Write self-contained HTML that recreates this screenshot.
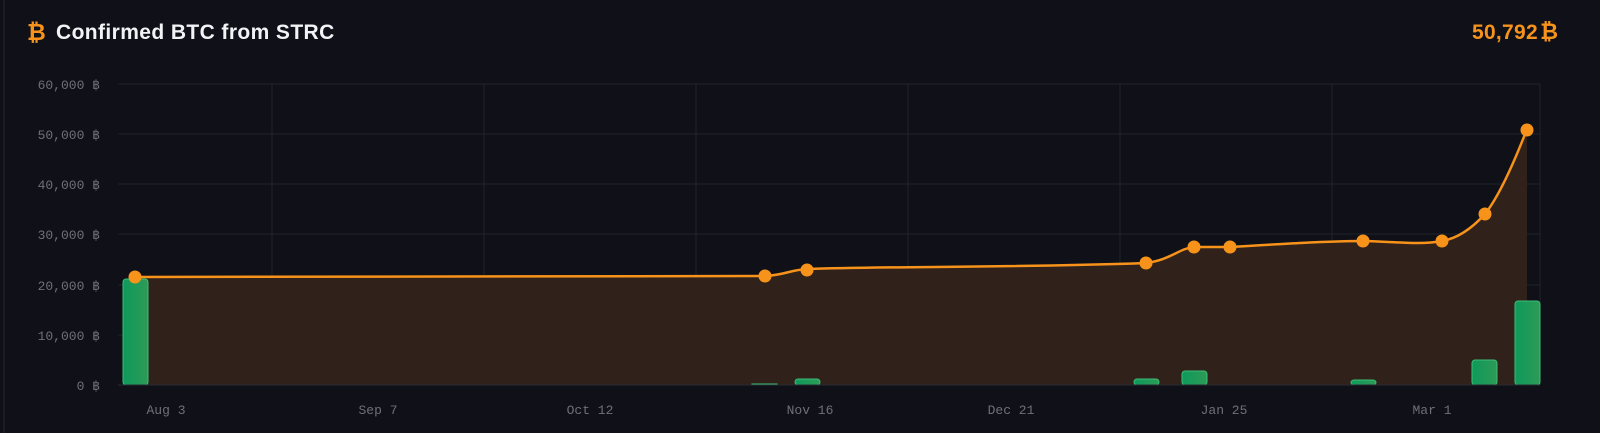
<!DOCTYPE html>
<html><head><meta charset="utf-8"><style>
html,body{margin:0;padding:0;background:#0f1018;width:1600px;height:433px;overflow:hidden}
body{position:relative;font-family:"Liberation Sans",sans-serif}
.edge{position:absolute;left:3px;top:0;width:2px;height:433px;background:#1a1b24}
.title{position:absolute;left:56px;top:21px;color:#f3f3f5;font-size:21px;font-weight:bold;letter-spacing:0.4px}
.ic{position:absolute;left:27px;top:19px;color:#f7931a;font-size:23px;font-weight:bold}
.val{position:absolute;right:62px;top:21px;color:#f7931a;font-size:21px;font-weight:bold;letter-spacing:0.3px}
.valb{position:absolute;right:42px;top:19px;color:#f7931a;font-size:22px;font-weight:bold}
svg{position:absolute;left:0;top:0}
</style></head><body>
<div class="edge"></div>
<div class="ic">₿</div>
<div class="title">Confirmed BTC from STRC</div>
<div class="val">50,792</div><div class="valb">₿</div>
<svg width="1600" height="433" viewBox="0 0 1600 433">
<defs>
<linearGradient id="g" x1="0" x2="1" y1="0" y2="0"><stop offset="0" stop-color="#0e9a5c"/><stop offset="1" stop-color="#2e9a56"/></linearGradient>
</defs>
<g stroke="#22232c" stroke-width="1">
<line x1="118" x2="1540" y1="84" y2="84"/><line x1="118" x2="1540" y1="134" y2="134"/><line x1="118" x2="1540" y1="184" y2="184"/><line x1="118" x2="1540" y1="234" y2="234"/><line x1="118" x2="1540" y1="285" y2="285"/><line x1="118" x2="1540" y1="335" y2="335"/>
<line x1="272" x2="272" y1="84" y2="385"/><line x1="484" x2="484" y1="84" y2="385"/><line x1="696" x2="696" y1="84" y2="385"/><line x1="908" x2="908" y1="84" y2="385"/><line x1="1120" x2="1120" y1="84" y2="385"/><line x1="1332" x2="1332" y1="84" y2="385"/><line x1="1540" x2="1540" y1="84" y2="385"/>
</g>
<path d="M135,277 L765,276 C785,275 790,270 807,269 C900,266 1000,268 1146,263 C1170,260 1180,248 1194,247 L1230,247 C1280,244 1330,241 1363,241 C1400,242 1420,245 1442,241 C1460,238 1475,225 1485,214 C1500,195 1515,160 1527,129 L1527,385 L135,385 Z" fill="#33241a" opacity="0.95"/>
<g fill="url(#g)" stroke="#3bbd75" stroke-width="1">
<rect x="123" y="279" width="25" height="106" rx="3"/>
<rect x="752" y="384" width="25" height="1"/>
<rect x="795" y="379" width="25" height="6" rx="3"/>
<rect x="1134" y="379" width="25" height="6" rx="3"/>
<rect x="1182" y="371" width="25" height="14" rx="3"/>
<rect x="1351" y="380" width="25" height="5" rx="3"/>
<rect x="1472" y="360" width="25" height="25" rx="3"/>
<rect x="1515" y="301" width="25" height="84" rx="3"/>
</g>
<line x1="118" x2="1540" y1="385" y2="385" stroke="#2a2b33"/>
<path d="M135,277 L765,276 C785,275 790,270 807,269 C900,266 1000,268 1146,263 C1170,260 1180,248 1194,247 L1230,247 C1280,244 1330,241 1363,241 C1400,242 1420,245 1442,241 C1460,238 1475,225 1485,214 C1500,195 1515,160 1527,129" fill="none" stroke="#f7931a" stroke-width="2.5"/>
<g fill="#f7931a">
<circle cx="135" cy="277" r="6.5"/><circle cx="765" cy="276" r="6.5"/><circle cx="807" cy="270" r="6.5"/><circle cx="1146" cy="263" r="6.5"/><circle cx="1194" cy="247" r="6.5"/><circle cx="1230" cy="247" r="6.5"/><circle cx="1363" cy="241" r="6.5"/><circle cx="1442" cy="241" r="6.5"/><circle cx="1485" cy="214" r="6.5"/><circle cx="1527" cy="130" r="6.5"/>
</g>
<g font-family="Liberation Mono, monospace" font-size="13" fill="#6e707a" text-anchor="end">
<text x="100" y="89">60,000 ฿</text><text x="100" y="139">50,000 ฿</text><text x="100" y="189">40,000 ฿</text><text x="100" y="239">30,000 ฿</text><text x="100" y="290">20,000 ฿</text><text x="100" y="340">10,000 ฿</text><text x="100" y="390">0 ฿</text>
</g>
<g font-family="Liberation Mono, monospace" font-size="13" fill="#6e707a" text-anchor="middle">
<text x="166" y="414">Aug 3</text><text x="378" y="414">Sep 7</text><text x="590" y="414">Oct 12</text><text x="810" y="414">Nov 16</text><text x="1011" y="414">Dec 21</text><text x="1224" y="414">Jan 25</text><text x="1432" y="414">Mar 1</text>
</g>
</svg>
</body></html>
